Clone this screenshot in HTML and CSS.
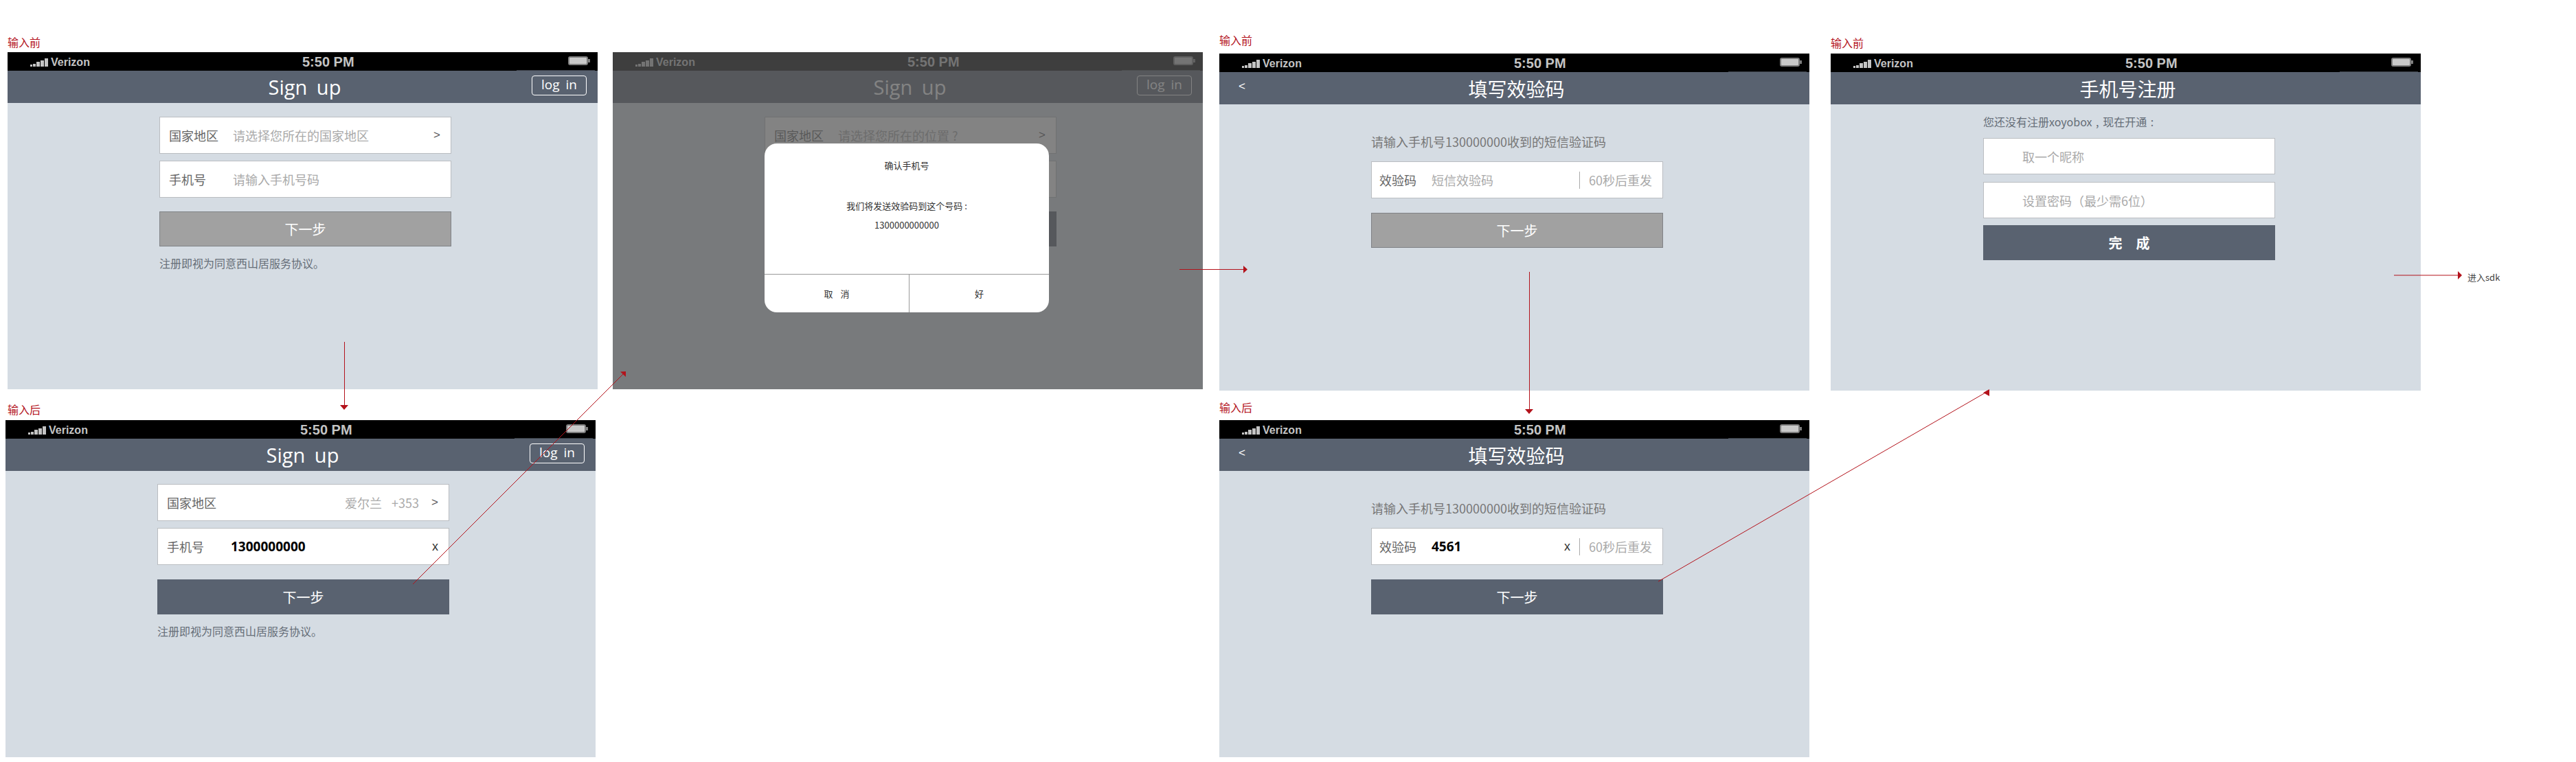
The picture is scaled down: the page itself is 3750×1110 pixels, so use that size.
FILE: index.html
```html
<!DOCTYPE html>
<html lang="zh-CN">

<head>
    <meta charset="UTF-8">
    <title>手机号注册流程</title>
    <link rel="stylesheet" href="styles.css">
</head>

<body>
    <div class="canvas">
        <span class="tag tag-a">输入前</span>
        <span class="tag tag-b">输入后</span>
        <span class="tag tag-c">输入前</span>
        <span class="tag tag-d">输入后</span>
        <span class="tag tag-e">输入前</span>

        <!-- step 1: before input -->
        <section class="screen screen-a">
            <div class="status">
                <div class="carrier"><span class="signal"><i></i><i></i><i></i><i></i><i></i></span>Verizon</div>
                <div class="time">5:50 PM</div>
                <div class="battery"></div>
            </div>
            <header class="nav">
                <h1 class="title latin">Sign up</h1>
                <span class="login">log in</span>
            </header>
            <div class="form form-tight">
                <div class="field">
                    <span class="label">国家地区</span>
                    <span class="hint">请选择您所在的国家地区</span>
                    <span class="chevron">&gt;</span>
                </div>
                <div class="field">
                    <span class="label">手机号</span>
                    <span class="hint">请输入手机号码</span>
                </div>
                <div class="btn btn-off">下一步</div>
                <p class="note">注册即视为同意西山居服务协议。</p>
            </div>
        </section>

        <!-- step 1: after input -->
        <section class="screen screen-b">
            <div class="status">
                <div class="carrier"><span class="signal"><i></i><i></i><i></i><i></i><i></i></span>Verizon</div>
                <div class="time">5:50 PM</div>
                <div class="battery"></div>
            </div>
            <header class="nav">
                <h1 class="title latin">Sign up</h1>
                <span class="login">log in</span>
            </header>
            <div class="form form-after">
                <div class="field">
                    <span class="label">国家地区</span>
                    <span class="picked">爱尔兰 +353</span>
                    <span class="chevron">&gt;</span>
                </div>
                <div class="field">
                    <span class="label">手机号</span>
                    <span class="typed">1300000000</span>
                    <span class="clear">x</span>
                </div>
                <div class="btn">下一步</div>
                <p class="note">注册即视为同意西山居服务协议。</p>
            </div>
        </section>

        <!-- step 2: confirm dialog, the second field and the button sit under it -->
        <section class="screen screen-c">
            <div class="status">
                <div class="carrier"><span class="signal"><i></i><i></i><i></i><i></i><i></i></span>Verizon</div>
                <div class="time">5:50 PM</div>
                <div class="battery"></div>
            </div>
            <header class="nav">
                <h1 class="title latin">Sign up</h1>
                <span class="login">log in</span>
            </header>
            <div class="form form-tight">
                <div class="field">
                    <span class="label">国家地区</span>
                    <span class="hint">请选择您所在的位置 ?</span>
                    <span class="chevron">&gt;</span>
                </div>
                <div class="field"></div>
                <div class="btn"></div>
            </div>
            <div class="overlay">
                <div class="dialog">
                    <div class="dialog-body">
                        <div class="dialog-title">确认手机号</div>
                        <div class="dialog-text">我们将发送效验码到这个号码 :</div>
                        <div class="dialog-number">1300000000000</div>
                    </div>
                    <div class="dialog-foot">
                        <span class="dialog-btn dialog-cancel">取 消</span>
                        <span class="dialog-btn">好</span>
                    </div>
                </div>
            </div>
        </section>

        <!-- step 3: code, before input -->
        <section class="screen screen-d">
            <div class="status">
                <div class="carrier"><span class="signal"><i></i><i></i><i></i><i></i><i></i></span>Verizon</div>
                <div class="time">5:50 PM</div>
                <div class="battery"></div>
            </div>
            <header class="nav">
                <span class="back">&lt;</span>
                <h1 class="title">填写效验码</h1>
            </header>
            <div class="form form-code">
                <p class="prompt">请输入手机号130000000收到的短信验证码</p>
                <div class="field field-code">
                    <span class="label">效验码</span>
                    <span class="hint">短信效验码</span>
                    <span class="resend">60秒后重发</span>
                </div>
                <div class="btn btn-off">下一步</div>
            </div>
        </section>

        <!-- step 3: code, after input -->
        <section class="screen screen-e">
            <div class="status">
                <div class="carrier"><span class="signal"><i></i><i></i><i></i><i></i><i></i></span>Verizon</div>
                <div class="time">5:50 PM</div>
                <div class="battery"></div>
            </div>
            <header class="nav">
                <span class="back">&lt;</span>
                <h1 class="title">填写效验码</h1>
            </header>
            <div class="form form-code">
                <p class="prompt">请输入手机号130000000收到的短信验证码</p>
                <div class="field field-code">
                    <span class="label">效验码</span>
                    <span class="typed">4561</span>
                    <span class="clear">x</span>
                    <span class="resend resend-after">60秒后重发</span>
                </div>
                <div class="btn">下一步</div>
            </div>
        </section>

        <!-- step 4: register -->
        <section class="screen screen-f">
            <div class="status">
                <div class="carrier"><span class="signal"><i></i><i></i><i></i><i></i><i></i></span>Verizon</div>
                <div class="time">5:50 PM</div>
                <div class="battery"></div>
            </div>
            <header class="nav">
                <h1 class="title">手机号注册</h1>
            </header>
            <div class="form form-reg">
                <p class="prompt prompt-small">您还没有注册xoyobox , 现在开通 :</p>
                <div class="field field-reg"><span class="hint">取一个昵称</span></div>
                <div class="field field-reg"><span class="hint">设置密码（最少需6位）</span></div>
                <div class="btn btn-done">完　成</div>
            </div>
        </section>

        <span class="sdk">进入sdk</span>

        <!-- flow arrows -->
        <svg class="arrows" width="3750" height="1110" viewBox="0 0 3750 1110">
            <g stroke="#b3121b" stroke-width="1" fill="none">
                <path d="M501.5 498V592" />
                <path d="M2226.5 396V598" />
                <path d="M1717 392.5H1812" />
                <path d="M3485 401H3580" />
                <path d="M601 851L907 545" />
                <path d="M2414 847L2892 571" />
            </g>
            <g fill="#b3121b">
                <polygon points="495,590 507,590 501,597" />
                <polygon points="2220,596 2232,596 2226,603" />
                <polygon points="1810,387 1816,392.5 1810,398" />
                <polygon points="3578,395 3584,401 3578,407" />
                <polygon points="911,541 903,541.5 911,549" />
                <polygon points="2896,567 2896,577 2887,572" />
            </g>
        </svg>
    </div>
</body>

</html>
```

FILE: styles.css
```css
/* Basic reset */
* {
    margin: 0;
    padding: 0;
    box-sizing: border-box;
}

body {
    background-color: #fff;
    font-family: "Noto Sans CJK SC", "Noto Sans", sans-serif;
}

/* the flow chart is a free canvas, frames are placed on it */
.canvas {
    position: relative;
    width: 3750px;
    height: 1110px;
    overflow: hidden;
}

.tag {
    position: absolute;
    font-size: 16px;
    line-height: 20px;
    color: #b3121b;
}

.tag-a { left: 11px; top: 51px; }
.tag-b { left: 11px; top: 586px; }
.tag-c { left: 1775px; top: 48px; }
.tag-d { left: 1775px; top: 583px; }
.tag-e { left: 2665px; top: 52px; }

.sdk {
    position: absolute;
    left: 3592px;
    top: 395px;
    font-size: 13px;
    line-height: 18px;
    color: #444;
}

.arrows {
    position: absolute;
    left: 0;
    top: 0;
}

.screen {
    position: absolute;
    width: 859px;
    height: 491px;
    background-color: #d5dce3;
}

.screen-a { left: 11px; top: 76px; }
.screen-b { left: 8px; top: 612px; }
.screen-c { left: 892px; top: 76px; }
.screen-d { left: 1775px; top: 78px; }
.screen-e { left: 1775px; top: 612px; }
.screen-f { left: 2665px; top: 78px; }

/* status bar */
.status {
    display: flex;
    align-items: center;
    height: 27px;
    background-color: #000;
    color: #c4c4c4;
    font-family: "Liberation Sans", sans-serif;
    font-weight: 700;
    position: relative;
}

.status::after {
    content: "";
    position: absolute;
    right: 4px;
    bottom: 0;
    width: 114px;
    height: 1px;
    background-color: #3a3f47;
}

.carrier {
    display: flex;
    align-items: center;
    flex: 0 0 429px;
    padding: 3px 0 0 33px;
    font-size: 16px;
}

.signal {
    display: flex;
    align-items: flex-end;
    gap: 1px;
    height: 12px;
    margin-right: 4px;
}

.signal i {
    width: 5px;
    background-color: #c4c4c4;
}

.signal i:nth-child(1) { height: 3px; width: 3px; }
.signal i:nth-child(2) { height: 4px; width: 4px; }
.signal i:nth-child(3) { height: 7px; }
.signal i:nth-child(4) { height: 9px; }
.signal i:nth-child(5) { height: 12px; }

.time {
    font-size: 20px;
    line-height: 24px;
}

.battery {
    position: relative;
    width: 29px;
    height: 13px;
    margin: 0 14px 3px auto;
    border: 2px solid #7d7d7d;
    border-radius: 3px;
    background-color: #c9c9c9;
}

.battery::after {
    content: "";
    position: absolute;
    right: -5px;
    top: 2px;
    width: 3px;
    height: 5px;
    background-color: #7d7d7d;
}

/* nav bar */
.nav {
    position: relative;
    display: flex;
    align-items: center;
    justify-content: center;
    height: 47px;
    padding-left: 6px;
    background-color: #596270;
    color: #fff;
}

.title {
    font-size: 28px;
    line-height: 40px;
    font-weight: 400;
}

.latin {
    font-family: "Open Sans", sans-serif;
    font-size: 29px;
    word-spacing: 6px;
}

.login {
    position: absolute;
    right: 16px;
    top: 7px;
    width: 80px;
    height: 29px;
    border: 1px solid #fff;
    border-radius: 4px;
    font-family: "Open Sans", sans-serif;
    font-size: 19px;
    line-height: 25px;
    text-align: center;
    word-spacing: 4px;
}

.back {
    position: absolute;
    left: 28px;
    top: 11px;
    font-family: "Liberation Sans", sans-serif;
    font-size: 17px;
    line-height: 20px;
}

/* form column */
.form {
    display: flex;
    flex-direction: column;
    width: 425px;
    margin-left: 221px;
    padding-top: 20px;
    gap: 11px;
}

.form-tight {
    gap: 10px;
}

.form-after {
    padding-top: 19px;
    gap: 10px;
}

.form-code {
    padding-top: 42px;
    gap: 0;
}

.form-reg {
    margin-left: 222px;
    padding-top: 13px;
    gap: 11px;
}

.field {
    display: flex;
    align-items: center;
    height: 54px;
    padding: 0 15px 0 13px;
    background-color: #fff;
    border: 1px solid #babdc1;
    font-size: 18px;
}

.field-code {
    padding-left: 11px;
}

.field-reg {
    height: 53px;
    padding-left: 56px;
}

.label {
    flex: 0 0 93px;
    color: #666;
}

.field-code .label {
    flex-basis: 76px;
}

.hint {
    color: #aaa;
}

.picked {
    margin-left: auto;
    color: #aaa;
    word-spacing: 10px;
}

.chevron {
    margin-left: auto;
    font-family: "Liberation Sans", sans-serif;
    font-size: 17px;
    color: #555;
}

.picked + .chevron {
    margin-left: 18px;
}

.typed {
    font-family: "Open Sans", sans-serif;
    font-size: 19px;
    font-weight: 700;
    color: #000;
}

.clear {
    margin-left: auto;
    font-family: "Liberation Sans", sans-serif;
    font-size: 18px;
    color: #333;
}

.resend {
    margin-left: auto;
    padding-left: 13px;
    border-left: 1px solid #aaa;
    line-height: 25px;
    color: #aaa;
}

.resend-after {
    margin-left: 13px;
}

.btn {
    height: 51px;
    margin-top: 10px;
    background-color: #596270;
    color: #fff;
    font-size: 20px;
    line-height: 51px;
    text-align: center;
}

.form-after .btn {
    margin-top: 11px;
}

.form-code .btn {
    margin-top: 21px;
}

.form-reg .btn {
    margin-top: -1px;
}

.btn-off {
    background-color: #a1a1a1;
    border: 1px solid #7f8286;
    line-height: 49px;
}

.btn-done {
    font-weight: 700;
}

.note {
    margin-top: 2px;
    font-size: 16px;
    line-height: 24px;
    color: #666e78;
}

.prompt {
    margin-bottom: 17px;
    font-size: 18px;
    line-height: 24px;
    color: #777;
}

.prompt-small {
    margin-bottom: 1px;
    font-size: 16px;
    color: #666e78;
    word-spacing: 2px;
}

/* dimmed state with the confirm dialog */
.overlay {
    position: absolute;
    inset: 0;
    padding: 133px 0 0 221px;
    background-color: rgba(85, 85, 85, 0.73);
}

.dialog {
    display: flex;
    flex-direction: column;
    width: 414px;
    height: 246px;
    background-color: #fff;
    border-radius: 18px;
    font-size: 13px;
    line-height: 20px;
    color: #333;
    text-align: center;
    overflow: hidden;
}

.dialog-body {
    flex: 1;
    padding-top: 22px;
}

.dialog-text {
    margin-top: 39px;
}

.dialog-number {
    margin-top: 8px;
}

.dialog-foot {
    display: flex;
    height: 56px;
    border-top: 1px solid #999;
}

.dialog-btn {
    flex: 1;
    line-height: 55px;
}

.dialog-cancel {
    flex: 0 0 211px;
    border-right: 1px solid #999;
    word-spacing: 8px;
}
```
